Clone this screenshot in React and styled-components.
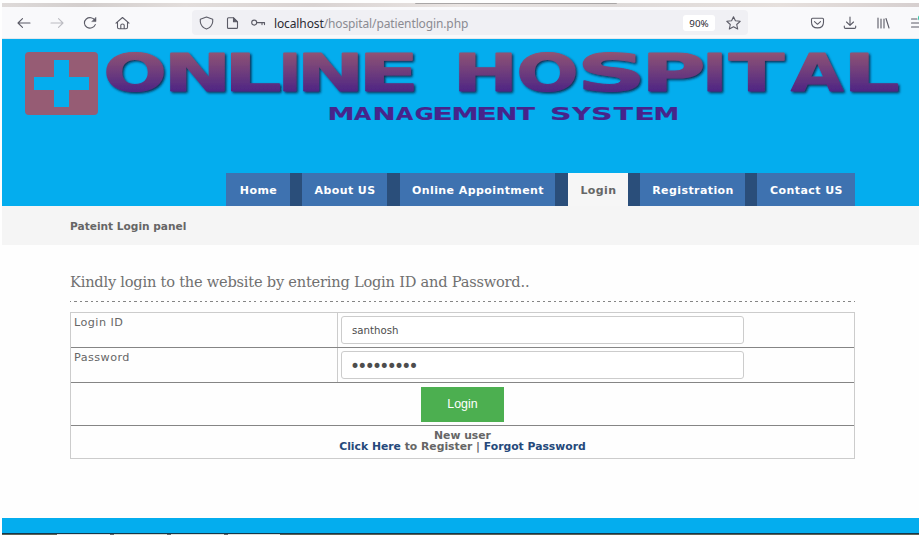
import React from "react";
import styled, { createGlobalStyle } from "styled-components";

const GlobalStyle = createGlobalStyle`
  * { box-sizing: border-box; }
  body { margin: 0; background: #fff; overflow: hidden; }
`;

const Page = styled.div`
  width: 919px;
  height: 535px;
  padding: 3px 0 0 2px;
  display: flex;
  flex-direction: column;
  background: #fefefe;
  color: #666;
  font-family: "DejaVu Sans", Verdana, sans-serif;
  overflow: hidden;
`;

const TabStrip = styled.div`
  height: 4px;
  flex: none;
  background: linear-gradient(90deg, #dedad9, #d3cecd 9%, #e2dddb 20%, #d9d3d2 34%, #e9e4e2 50%, #dedad9 66%, #e6e0dd 85%, #d6cfcf);
`;

const TabEdge = styled.div`
  width: 202px;
  height: 1px;
  margin-left: 413px;
  background: #a9a6a6;
  border-radius: 0 0 4px 4px;
`;

const Toolbar = styled.div`
  height: 32px;
  flex: none;
  display: flex;
  align-items: center;
  background: #f9f9fb;
  border-bottom: 1px solid #e3e9ee;
  overflow: hidden;
`;

const NavIcons = styled.div`
  width: 190px;
  height: 20px;
  flex: none;
  display: flex;
  align-items: center;
  padding-left: 14px;
  gap: 17px;
`;

const AddressBar = styled.div`
  width: 556px;
  height: 25px;
  flex: none;
  display: flex;
  align-items: center;
  padding: 0 6px 0 7px;
  background: #f0f0f4;
  border-radius: 4px;
`;

const AddressIcons = styled.div`
  display: flex;
  gap: 10px;
  width: 75px;
`;

const Url = styled.span`
  flex: 1;
  padding-top: 2px;
  font: 12px "Noto Sans", sans-serif;
  letter-spacing: -0.12px;
  color: #8b8b92;
  white-space: nowrap;
`;

const Host = styled.span`
  color: #2b2a33;
`;

const Zoom = styled.span`
  width: 32px;
  height: 16px;
  margin-right: 11px;
  border-radius: 3px;
  background: #fff;
  color: #2b2a33;
  font: 9.8px/17px "Noto Sans", sans-serif;
  text-align: center;
`;

const ToolIcons = styled.div`
  display: flex;
  align-items: center;
  gap: 17px;
  padding-left: 61px;
`;

const Glyph = styled.svg`
  display: block;
  flex: none;
  width: 16px;
  height: 16px;
  fill: none;
  stroke: ${(p) => p.$color || "#5b5b66"};
  stroke-width: 1.1;
  stroke-linecap: round;
  stroke-linejoin: round;
`;

const Header = styled.header`
  height: 167px;
  flex: none;
  display: flex;
  flex-direction: column;
  justify-content: space-between;
  background: #04adee;
`;

const Banner = styled.svg`
  display: block;
  width: 917px;
  height: 90px;
  flex: none;
`;

const Menu = styled.nav`
  align-self: flex-start;
  display: flex;
  height: 33px;
  width: 629px;
  margin-left: 224px;
  background: #2a4e7a;
`;

const MenuItem = styled.a`
  width: ${(p) => p.$w}px;
  margin-right: ${(p) => p.$gap}px;
  padding-left: 1px;
  flex: none;
  line-height: 35px;
  text-align: center;
  white-space: nowrap;
  font-size: 11px;
  letter-spacing: 0.42px;
  font-weight: bold;
  color: ${(p) => (p.$active ? "#666" : "#fff")};
  background: ${(p) => (p.$active ? "#f6f6f6" : "#3e72b0")};
`;

const Crumb = styled.div`
  height: 39px;
  flex: none;
  padding-left: 68px;
  background: #f5f5f5;
  font-size: 10.6px;
  font-weight: bold;
  line-height: 41px;
`;

const Main = styled.main`
  width: 785px;
  height: 273px;
  flex: none;
  margin-left: 68px;
  padding-top: 25px;
`;

const Title = styled.h1`
  margin: 0;
  height: 31px;
  font: 14.6px/24px "DejaVu Serif", Georgia, serif;
  letter-spacing: -0.22px;
  white-space: nowrap;
  color: #707070;
`;

const Dots = styled.div`
  height: 1px;
  margin-bottom: 10px;
  background: repeating-linear-gradient(90deg, #858585 0 1.2px, transparent 1.2px 4.2px, #858585 4.2px 5.45px);
`;

const Form = styled.form`
  border: 1px solid #ccc;
`;

const Row = styled.div`
  display: flex;
  height: ${(p) => p.$h}px;
  border-bottom: ${(p) => (p.$last ? "0" : "1px solid #858585")};
`;

const Label = styled.label`
  width: 267px;
  flex: none;
  padding: 3px 3px;
  border-right: 1px solid #ccc;
  font-size: 11.2px;
  letter-spacing: 0.45px;
  line-height: 13px;
`;

const Field = styled.input`
  width: 403px;
  height: 28px;
  margin: 3px 0 0 3px;
  padding: 1px 0 0 ${(p) => p.$pad || 10}px;
  border: 1px solid #ccc;
  border-radius: 3px;
  outline: 0;
  color: #4d4d4d;
  background: #fff;
  font: ${(p) => p.$size || 10.2}px "DejaVu Sans", sans-serif;
  letter-spacing: ${(p) => p.$track || 0}px;
`;

const ButtonCell = styled.div`
  flex: 1;
  display: flex;
  justify-content: center;
  align-items: center;
`;

const Submit = styled.button`
  width: 83px;
  height: 35px;
  padding: 0;
  border: 0;
  background: #4caf50;
  color: #fff;
  font: 12.4px "Liberation Sans", Arial, sans-serif;
`;

const Help = styled.p`
  flex: 1;
  margin: 0;
  padding-top: 4px;
  text-align: center;
  font-size: 10.8px;
  font-weight: bold;
  line-height: 11px;
`;

const HelpLink = styled.a`
  color: #25497b;
`;

const Footer = styled.footer`
  height: 16px;
  flex: none;
  background: #04adee;
  border-bottom: 1px solid #14384c;
`;

const Taskbar = styled.div`
  height: 1px;
  background: linear-gradient(90deg, #5e6355 0 55px, #e2e2e2 55px 108px, #666 108px 112px, #d8dacf 112px 165px, #666 165px 169px, #dedfd8 169px 222px, #666 222px 226px, #dedfd8 226px 278px, #5e6355 278px);
`;

const items = [
  ["Home", 64, 12],
  ["About US", 85, 13],
  ["Online Appointment", 155, 13],
  ["Login", 60, 12],
  ["Registration", 105, 12],
  ["Contact US", 98, 0],
];

// Advance, left edge and right edge of each bold capital, in font units.
const metrics = {
  O: [1741, 102, 1638],
  N: [1714, 188, 1526],
  L: [1305, 188, 1266],
  I: [762, 188, 573],
  E: [1399, 188, 1276],
  H: [1714, 188, 1526],
  S: [1475, 135, 1370],
  P: [1501, 188, 1419],
  T: [1397, 10, 1386],
  A: [1585, 10, 1573],
  M: [2038, 188, 1849],
  G: [1681, 102, 1522],
  Y: [1483, -20, 1503],
};

// Each word lists its letters with the left and right edge they span.
const titleWords = [
  [["O", 105, 161], ["N", 169, 222], ["L", 230, 278], ["I", 282, 294], ["N", 302, 355], ["E", 364, 412]],
  [["H", 458, 509], ["O", 518, 573], ["S", 581, 639], ["P", 647, 700], ["I", 706, 719], ["T", 727, 782], ["A", 789, 841], ["L", 849, 896]],
];
const subWords = [
  [["M", 328, 350], ["A", 352, 369], ["N", 373, 391], ["A", 394, 411], ["G", 414, 430], ["E", 433, 449], ["M", 452, 474], ["E", 477, 493], ["N", 496, 513], ["T", 515, 533]],
  [["S", 550, 568], ["Y", 570, 589], ["S", 591, 609], ["T", 612, 631], ["E", 635, 651], ["M", 654, 675]],
];

function Word({ letters, y, ...rest }) {
  return (
    <text y={y} fontFamily="DejaVu Sans, sans-serif" fontWeight="bold" {...rest}>
      {letters.map(([ch, left, right], i) => {
        const [adv, lo, hi] = metrics[ch];
        const k = (right - left) / (hi - lo);
        return (
          <tspan key={i} x={left - lo * k} textLength={adv * k} lengthAdjust="spacingAndGlyphs">
            {ch}
          </tspan>
        );
      })}
    </text>
  );
}

function Logo() {
  return (
    <Banner viewBox="0 0 917 90">
      <defs>
        <linearGradient id="fade" gradientUnits="userSpaceOnUse" x1="0" y1="8" x2="0" y2="57">
          <stop offset="0" stopColor="#985a72" />
          <stop offset="1" stopColor="#472086" />
        </linearGradient>
        <filter id="shade" x="-5%" y="-20%" width="110%" height="150%">
          <feDropShadow dx="1.5" dy="1.5" stdDeviation="0.8" floodColor="#071c3c" floodOpacity="0.9" />
        </filter>
      </defs>
      <path
        fill="#965c74"
        fillRule="evenodd"
        d="M27 13H92Q96 13 96 17V72Q96 76 92 76H27Q23 76 23 72V17Q23 13 27 13ZM52 21V38H32V51H52V68H67V51H87V38H67V21Z"
      />
      <g filter="url(#shade)" fill="url(#fade)" stroke="url(#fade)" strokeWidth="1" strokeLinejoin="bevel">
        {titleWords.map((w, i) => <Word key={i} letters={w} y={51.5} fontSize="51" />)}
      </g>
      <g fill="#47248b" stroke="#47248b" strokeWidth="0.2">
        {subWords.map((w, i) => <Word key={i} letters={w} y={80.5} fontSize="18.5" />)}
      </g>
    </Banner>
  );
}

export default function App() {
  return (
    <Page>
      <GlobalStyle />
      <TabStrip><TabEdge /></TabStrip>
      <Toolbar>
        <NavIcons>
          <Glyph viewBox="0 0 16 16"><path d="M14 8H2M6.5 3.7L2 8L6.5 12.3" /></Glyph>
          <Glyph viewBox="0 0 16 16" $color="#bcbcc2"><path d="M2 8H14M9.5 3.7L14 8L9.5 12.3" /></Glyph>
          <Glyph viewBox="0 0 16 16"><path d="M13 5.5A5.6 5.2 0 1 0 13.3 9.6" /><path d="M14 2.6V6.6H10Z" fill="#5b5b66" strokeWidth="0.5" /></Glyph>
          <Glyph viewBox="0 0 16 16"><path d="M1 8.2L7.5 2.5L14 8.2M2.5 7V12.3Q2.5 13.8 4 13.8H11Q12.5 13.8 12.5 12.3V7M5.8 13.8V10.2Q5.8 9 7.5 9Q9.2 9 9.2 10.2V13.8" /></Glyph>
        </NavIcons>
        <AddressBar>
          <AddressIcons>
            <Glyph viewBox="0 0 16 16"><path d="M7.5 2L13.7 4.2V7Q13 12 7.5 14Q2 12 1.3 7V4.2Z" /></Glyph>
            <Glyph viewBox="0 0 16 16"><path d="M3.5 2.8H8.5L12.5 6.8V12.4Q12.5 13.4 11.5 13.4H3.5Q2.5 13.4 2.5 12.4V3.8Q2.5 2.8 3.5 2.8Z" /><path d="M8.5 2.8V6.8H12.5Z" fill="#5b5b66" /></Glyph>
            <Glyph viewBox="0 0 16 16"><circle cx="3.2" cy="7.6" r="2.5" /><path d="M5.7 7.6H13.5V9.6M11 7.6V9.6" /></Glyph>
          </AddressIcons>
          <Url><Host>localhost</Host>/hospital/patientlogin.php</Url>
          <Zoom>90%</Zoom>
          <Glyph viewBox="0 0 16 16"><path d="M7.5 1.7L9.4 5.8L14.2 6.3L10.7 9.5L11.7 14L7.5 11.7L3.3 14L4.3 9.5L0.8 6.3L5.6 5.8Z" /></Glyph>
        </AddressBar>
        <ToolIcons>
          <Glyph viewBox="0 0 16 16"><path d="M3.5 3.3H13.5Q14.5 3.3 14.5 4.3V7.3Q14.5 12.9 8.5 12.9Q2.5 12.9 2.5 7.3V4.3Q2.5 3.3 3.5 3.3ZM5.5 6.7L8.5 9.3L11.5 6.7" /></Glyph>
          <Glyph viewBox="0 0 16 16"><path d="M8 2V10M4.5 7L8 10.3L11.5 7M2.3 11V12.2Q2.3 13.4 3.5 13.4H12.5Q13.7 13.4 13.7 12.2V11" /></Glyph>
          <Glyph viewBox="0 0 16 16"><path d="M3 3V13M6 4V13M9 4V13M11 3.5L14 13" /></Glyph>
          <Glyph viewBox="0 0 16 16"><path d="M3.5 4H9M3.5 8H14M3.5 12H14" /><circle cx="13" cy="3" r="3" fill="#2ac3a2" stroke="none" /></Glyph>
        </ToolIcons>
      </Toolbar>
      <Header>
        <Logo />
        <Menu>
          {items.map(([name, w, gap]) => (
            <MenuItem key={name} $w={w} $gap={gap} $active={name === "Login"}>{name}</MenuItem>
          ))}
        </Menu>
      </Header>
      <Crumb>Pateint Login panel</Crumb>
      <Main>
        <Title>Kindly login to the website by entering Login ID and Password..</Title>
        <Dots />
        <Form>
          <Row $h={35}>
            <Label>Login ID</Label>
            <Field defaultValue="santhosh" />
          </Row>
          <Row $h={35}>
            <Label>Password</Label>
            <Field type="password" defaultValue="santhosh1" $size={17} $track={-2.7} $pad={8} />
          </Row>
          <Row $h={43}>
            <ButtonCell><Submit type="button">Login</Submit></ButtonCell>
          </Row>
          <Row $h={32} $last>
            <Help>
              New user<br />
              <HelpLink>Click Here</HelpLink> to Register | <HelpLink>Forgot Password</HelpLink>
            </Help>
          </Row>
        </Form>
      </Main>
      <Footer />
      <Taskbar />
    </Page>
  );
}
